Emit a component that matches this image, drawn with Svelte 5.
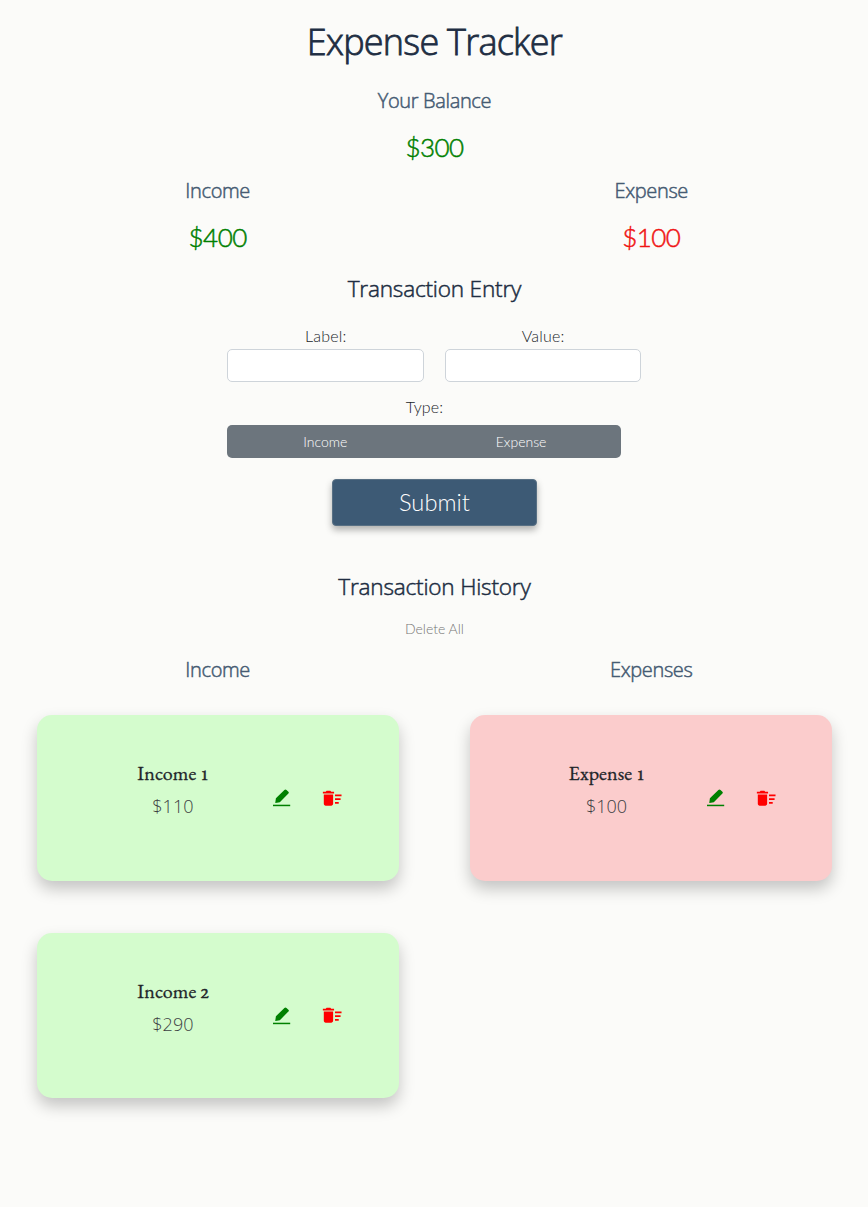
<script>
  const incomes = [
    { label: 'Income', number: 1, value: 110 },
    { label: 'Income', number: 2, value: 290 }
  ];
  const expenses = [{ label: 'Expense', number: 1, value: 100 }];
</script>

{#snippet card(item, kind)}
  <article class="card {kind}">
    <div class="info">
      <h4>{item.label} <span>{item.number}</span></h4>
      <p>${item.value}</p>
    </div>
    <button class="icon edit" aria-label="Edit">
      <svg viewBox="0 0 22 22" width="22" height="22">
        <path fill="#008000" d="M13.4 3.1Q14.4 2.1 15.5 3.1L17.4 4.7Q18.4 5.6 17.4 6.6L8.8 15.2L4.6 15.9Q4.2 16 4.3 15.5L4.9 11.3Z" />
        <path fill="#008000" d="M2 17.7h17.2v1.5h-17.2z" />
      </svg>
    </button>
    <button class="icon remove" aria-label="Delete">
      <svg viewBox="0 0 24 24" width="22.4" height="22.4">
        <path fill="#ff0000" d="M15 16h4v2h-4zm0-8h7v2h-7zm0 4h6v2h-6zM3 18c0 1.1.9 2 2 2h6c1.1 0 2-.9 2-2V8H3v10zM14 5h-3l-1-1H6L5 5H2v2h12z" />
      </svg>
    </button>
  </article>
{/snippet}

<main>
  <h1>Expense Tracker</h1>
  <h3>Your Balance</h3>
  <p class="amount total">$300</p>
  <section class="columns">
    <div>
      <h3 class="short">Income</h3>
      <p class="amount">$400</p>
    </div>
    <div>
      <h3 class="short">Expense</h3>
      <p class="amount spent">$100</p>
    </div>
  </section>

  <h2>Transaction Entry</h2>
  <form>
    <div class="fields">
      <label>Label:<input type="text" /></label>
      <label>Value:<input type="text" /></label>
    </div>
    <div class="type">Type:</div>
    <div class="group">
      <button type="button">Income</button>
      <button type="button">Expense</button>
    </div>
    <button type="button" class="submit">Submit</button>
  </form>

  <h2 class="history">Transaction History</h2>
  <button class="clear">Delete All</button>
  <section class="columns">
    <div>
      <h3 class="list-title">Income</h3>
      <div class="cards">
        {#each incomes as item}{@render card(item, 'income')}{/each}
      </div>
    </div>
    <div>
      <h3 class="list-title">Expenses</h3>
      <div class="cards">
        {#each expenses as item}{@render card(item, 'expense')}{/each}
      </div>
    </div>
  </section>
</main>

<style>
  :global(body) { margin: 0; background: #fbfbf9; }
  main {
    min-height: 1207px;
    box-sizing: border-box;
    padding: 1px 0 0 0.9px;
    text-align: center;
    font-family: Lato, sans-serif;
    font-weight: 300;
    color: #212529;
  }
  h1, h2, h3, h4, p { margin: 0; }
  button { border: 0; padding: 0; background: none; font: inherit; color: inherit; }
  h1, h2, h3 { font-family: 'Open Sans', sans-serif; font-weight: 300; -webkit-text-stroke: 0.5px; }
  h1 { font-size: 36px; line-height: 81px; padding-bottom: 1px; letter-spacing: -0.75px; color: #202d42; -webkit-text-stroke: 0.8px; }
  h2 { font-size: 22.6px; line-height: 36px; letter-spacing: -0.2px; color: #202d42; }
  h3 { font-size: 20px; line-height: 36px; letter-spacing: -0.35px; color: #465b73; }
  h3.short { line-height: 28px; }
  h3.list-title { line-height: 38px; }
  .amount { font-size: 26px; line-height: 64px; padding-bottom: 2px; letter-spacing: -0.55px; color: #008000; -webkit-text-stroke: 0.5px; }
  .amount.total { line-height: 56px; }
  .amount.spent { color: #f01414; }
  .columns { display: grid; grid-template-columns: 1fr 1fr; }

  form { width: 414px; margin: 16px auto 0; }
  .fields { display: grid; grid-template-columns: 1fr 1fr; gap: 21px; }
  label { font-size: 16px; line-height: 26px; letter-spacing: 0.2px; display: flex; flex-direction: column; }
  input {
    height: 33px;
    min-width: 0;
    box-sizing: border-box;
    border: 1px solid #ced4da;
    border-radius: 5px;
    background: #fff;
  }
  .type { width: 394px; font-size: 16px; line-height: 36px; letter-spacing: 0.1px; margin-top: 7px; }
  .group {
    display: grid;
    grid-template-columns: 1fr 1fr;
    width: 393.5px;
    height: 33px;
    box-sizing: border-box;
    padding-right: 2px;
    border-radius: 5px;
    background: #6c757d;
    color: #fff;
    font-size: 14px;
  }
  .submit {
    display: block;
    width: 205.6px;
    height: 47px;
    margin: 21px auto 0;
    border: 1px solid #587084;
    border-radius: 4px;
    background: #3d5a75;
    color: #fff;
    font-size: 23.7px;
    line-height: 44px;
    padding-bottom: 1px;
    box-shadow: 0 4px 7px rgba(0, 0, 0, 0.3);
  }
  h2.history { margin-top: 42px; line-height: 38px; }
  .clear { display: block; margin: 0 auto; font-size: 14px; line-height: 45px; color: #777; }

  .cards { display: flex; flex-direction: column; gap: 52.3px; padding: 26px 35.6px 0 36px; }
  .card {
    display: flex;
    align-items: center;
    height: 165.6px;
    box-sizing: border-box;
    padding-left: 75.5px;
    border-radius: 15px;
    box-shadow: 0 8px 16px rgba(0, 0, 0, 0.22);
  }
  .income { background: #d4fccd; }
  .expense { background: #fbcccc; }
  .info { width: 121px; padding-bottom: 16px; }
  h4 { font: 400 20px/33px 'EB Garamond', 'Liberation Serif', serif; letter-spacing: 0.1px; -webkit-text-stroke: 0.3px; }
  h4 span { display: inline-block; font-size: 14.5px; line-height: 14px; margin-left: 1px; transform: scaleX(1.15); -webkit-text-stroke: 0.5px; }
  .info p { font-family: 'Open Sans', sans-serif; font-size: 18px; line-height: 33px; color: #3c4043; }
  .icon { display: flex; }
  .edit { margin-left: 38px; }
  .remove { margin-left: 28px; }
</style>
